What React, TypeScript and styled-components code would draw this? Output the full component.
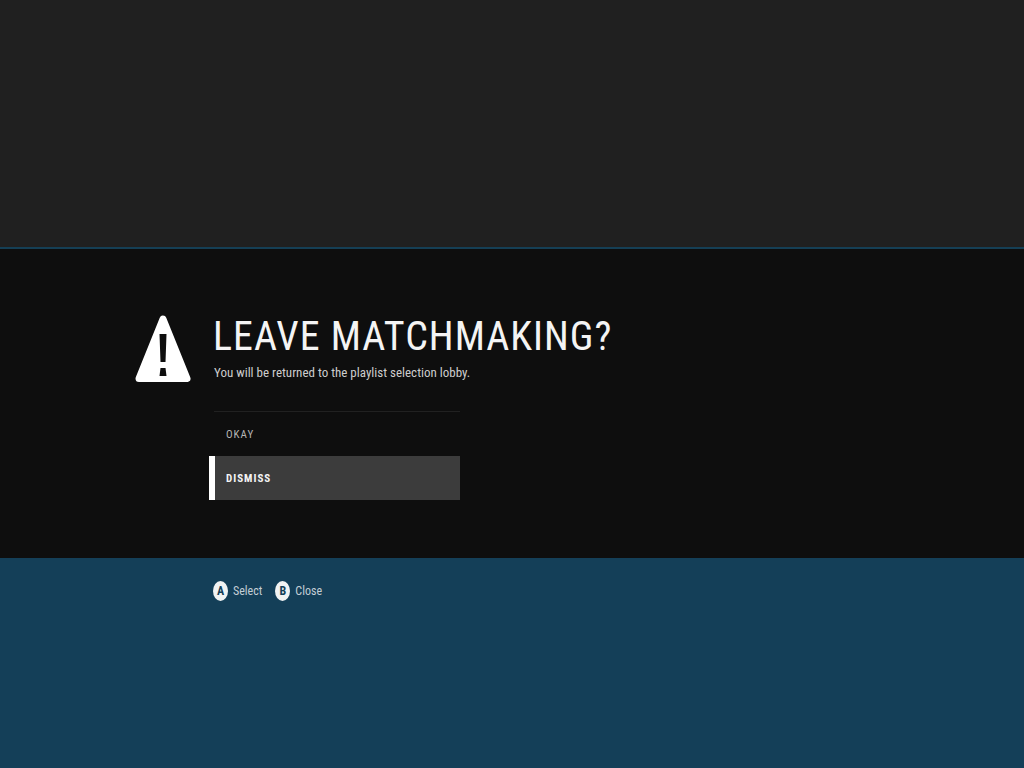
import React from "react";
import styled, { createGlobalStyle } from "styled-components";

const GlobalStyle = createGlobalStyle`
  *, *::before, *::after { box-sizing: border-box; }
  body {
    margin: 0;
    background: #143f58;
    color: #f4f4f4;
    font-family: "Roboto Condensed", "Liberation Sans Narrow", "Liberation Sans", sans-serif;
  }
`;

const Screen = styled.div`
  min-height: 100vh;
  display: grid;
  grid-template-rows: 247fr auto 210fr;
`;

const Backdrop = styled.div`
  background: #202020;
`;

const Dialog = styled.main`
  display: grid;
  grid-template-columns: 56px minmax(0, 1fr);
  column-gap: 22px;
  align-items: start;
  padding: 66px 24px 58px 135px;
  border-top: 2px solid #153f55;
  background: #0e0e0e;
`;

const WarningIcon = styled.svg`
  display: block;
  width: 56px;
  height: 68px;
`;

const Title = styled.h1`
  margin: 0;
  font-size: 40px;
  line-height: 44px;
  font-weight: 400;
  letter-spacing: 1px;
  text-transform: uppercase;
`;

const Message = styled.p`
  margin: 4px 0 0;
  padding-left: 1px;
  font-size: 13px;
  line-height: 20px;
  color: #cdcdcd;
`;

const Options = styled.div`
  display: flex;
  flex-direction: column;
  width: 246px;
  margin: 28px 0 0 1px;
  border-top: 1px solid #212121;
`;

const Option = styled.button<{ $active?: boolean }>`
  height: 44px;
  margin: 0 0 0 -5px;
  padding: 0 12px 0 11px;
  border: 0;
  border-left: 6px solid ${(p) => (p.$active ? "#ffffff" : "transparent")};
  background: ${(p) => (p.$active ? "#3c3c3c" : "transparent")};
  color: ${(p) => (p.$active ? "#f4f4f4" : "#b4b4b4")};
  font: inherit;
  font-size: 11px;
  font-weight: ${(p) => (p.$active ? 700 : 400)};
  letter-spacing: 1px;
  text-align: left;
  text-transform: uppercase;
  cursor: pointer;
`;

const Footer = styled.footer`
  display: flex;
  align-items: flex-start;
  gap: 13px;
  padding: 23px 24px 24px 213px;
  background: #143f58;
`;

const Hint = styled.button`
  display: flex;
  align-items: center;
  gap: 5px;
  padding: 0;
  border: 0;
  background: none;
  color: #c3ced5;
  font: inherit;
  font-size: 12px;
  line-height: 20px;
  cursor: pointer;
`;

const Key = styled.span`
  width: 15px;
  height: 20px;
  border-radius: 50%;
  background: #f1f3f3;
  color: #143f58;
  font-size: 12px;
  font-weight: 700;
  line-height: 20px;
  text-align: center;
`;

export default function App() {
  return (
    <>
      <GlobalStyle />
      <Screen>
        <Backdrop />
        <Dialog role="alertdialog" aria-labelledby="title" aria-describedby="message">
          <WarningIcon viewBox="0 0 56 68" aria-hidden="true">
            <path
              fill="#ffffff"
              stroke="#ffffff"
              strokeWidth="7"
              strokeLinejoin="round"
              d="M28 4 L52 63.5 H4Z"
            />
            <path fill="#0e0e0e" d="M24.5 19 H31.5 L30.5 47 H25.5Z M25.5 53 H30.5 L31.5 61 H24.5Z" />
          </WarningIcon>
          <div>
            <Title id="title">Leave matchmaking?</Title>
            <Message id="message">You will be returned to the playlist selection lobby.</Message>
            <Options>
              <Option type="button">Okay</Option>
              <Option type="button" $active>
                Dismiss
              </Option>
            </Options>
          </div>
        </Dialog>
        <Footer>
          <Hint type="button">
            <Key>A</Key>Select
          </Hint>
          <Hint type="button">
            <Key>B</Key>Close
          </Hint>
        </Footer>
      </Screen>
    </>
  );
}
